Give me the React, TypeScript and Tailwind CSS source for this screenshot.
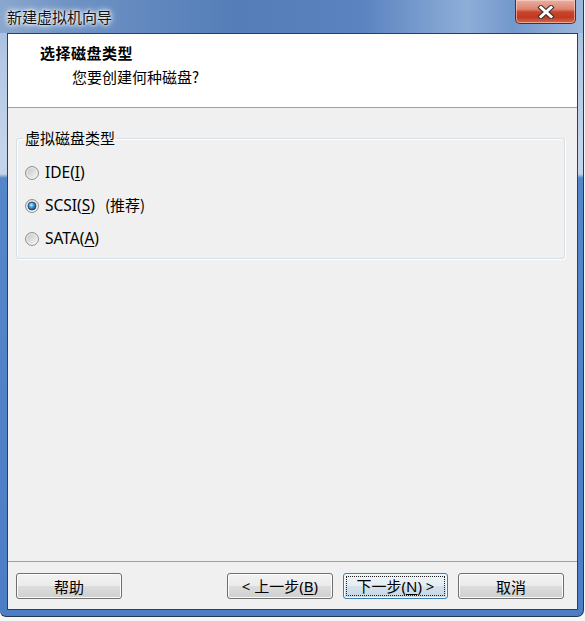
import React from "react";

function Radio({ checked }: { checked?: boolean }) {
  return (
    <svg width="14" height="14" viewBox="0 0 14 14" className="shrink-0">
      <defs>
        <linearGradient id="rfill" x1="0" y1="0" x2="1" y2="1">
          <stop offset="0" stopColor="#c2c2c2" />
          <stop offset="0.5" stopColor="#dedede" />
          <stop offset="1" stopColor="#f8f8f8" />
        </linearGradient>
        <radialGradient id="rdot" cx="0.42" cy="0.38" r="0.7">
          <stop offset="0" stopColor="#d2f0ff" />
          <stop offset="0.35" stopColor="#4eaae6" />
          <stop offset="0.75" stopColor="#1a62a0" />
          <stop offset="1" stopColor="#0f3a62" />
        </radialGradient>
      </defs>
      <circle cx="7" cy="7" r="6.4" fill="url(#rfill)" stroke="#858686" strokeWidth="1" />
      <circle cx="7" cy="7" r="5.3" fill="none" stroke="#f4f4f4" strokeWidth="0.8" />
      {checked && (
        <circle cx="7" cy="7" r="4" fill="url(#rdot)" stroke="#163f66" strokeWidth="0.8" />
      )}
    </svg>
  );
}

function CloseX() {
  return (
    <svg width="18" height="14" viewBox="0 0 18 14">
      <g strokeLinecap="square">
        <line x1="4" y1="2.5" x2="14" y2="11.5" stroke="#3a3030" strokeWidth="5" />
        <line x1="14" y1="2.5" x2="4" y2="11.5" stroke="#3a3030" strokeWidth="5" />
        <line x1="4" y1="2.5" x2="14" y2="11.5" stroke="#ffffff" strokeWidth="3" />
        <line x1="14" y1="2.5" x2="4" y2="11.5" stroke="#ffffff" strokeWidth="3" />
      </g>
    </svg>
  );
}

export default function App() {
  return (
    <div className="w-[585px] h-[621px] bg-[#f4f6f8] overflow-hidden font-['Noto_Sans','Noto_Sans_CJK_SC',sans-serif]">
      <div className="w-[584px] h-[617px] flex flex-col border-r border-b border-[#26374f] rounded-bl-[6px] rounded-br-[7px] overflow-hidden bg-[linear-gradient(to_bottom,#9db8dd_0px,#b4c8e4_60px,#c2d3ea_140px,#c2d3ea_174px,#5686c9_178px,#4c7ec6_100%)]">
        {/* Title bar */}
        <div className="h-[33px] shrink-0 flex items-start bg-[linear-gradient(to_right,#8ba7ce_0%,#6e92c4_12%,#557eb8_40%,#5a83bf_62%,#8eaed8_80%,#7398cb_88%,#9cb7dc_100%)]">
          <div className="pl-[7px] pt-[6px] text-[15px] leading-[22px] text-[#141414] [text-shadow:0_0_8px_#ffffff,0_0_5px_#ffffff,0_0_3px_rgba(255,255,255,0.9)] font-['Noto_Sans_CJK_SC',sans-serif]">
            新建虚拟机向导
          </div>
          <div className="flex-1" />
          <div className="mr-[7px] w-[61px] h-[24px] rounded-b-[5px] border border-t-0 border-[#5b2a22] flex items-center justify-center bg-[linear-gradient(to_bottom,#eab0a4_0%,#dc8470_40%,#c8452c_52%,#c13a21_75%,#d26a52_100%)] shadow-[inset_0_0_0_1px_rgba(255,220,210,0.55)]">
            <CloseX />
          </div>
        </div>

        {/* Client */}
        <div className="ml-[7px] mr-[5px] h-[577px] shrink-0 border border-[#2e3f58] bg-[#f0f0f0] flex flex-col">
          {/* Header */}
          <div className="h-[74px] shrink-0 bg-white border-b border-[#a0a0a0] pt-[9px] pl-[32px]">
            <div className="text-[15px] leading-[20px] font-bold tracking-[0.5px] text-black font-['Noto_Sans_CJK_SC',sans-serif]">
              选择磁盘类型
            </div>
            <div className="mt-[4px] ml-[32px] text-[15px] leading-[20px] text-black font-['Noto_Sans_CJK_SC',sans-serif]">
              您要创建何种磁盘?
            </div>
          </div>

          {/* Body */}
          <div className="flex-1 flex flex-col">
            <fieldset className="mt-[20px] ml-[8px] mr-[12px] border border-[#d5dfe5] rounded-[3px] shadow-[inset_1px_1px_0_#ffffff,1px_1px_0_#ffffff]">
              <legend className="ml-[6px] px-[2px] text-[15px] leading-[20px] text-black font-['Noto_Sans_CJK_SC',sans-serif]">
                虚拟磁盘类型
              </legend>
              <div className="pl-[8px] pt-[8px] pb-[3px]">
                <div className="h-[33px] flex items-center gap-[6px] text-[15.5px] text-black">
                  <Radio />
                  <span>
                    IDE(<span className="underline underline-offset-2">I</span>)
                  </span>
                </div>
                <div className="h-[33px] flex items-center gap-[6px] text-[15.5px] text-black">
                  <Radio checked />
                  <span>
                    SCSI(<span className="underline underline-offset-2">S</span>)
                  </span>
                  <span className="ml-[4px] text-[15px] font-['Noto_Sans_CJK_SC',sans-serif]">(推荐)</span>
                </div>
                <div className="h-[33px] flex items-center gap-[6px] text-[15.5px] text-black">
                  <Radio />
                  <span>
                    SATA(<span className="underline underline-offset-2">A</span>)
                  </span>
                </div>
              </div>
            </fieldset>

            <div className="flex-1" />

            <div className="h-px bg-[#a0a0a0]" />

            {/* Footer */}
            <div className="h-[47px] shrink-0 flex items-start pt-[11px] pl-[8px] pr-[13px]">
              <button className="w-[106px] h-[26px] rounded-[3px] border border-[#707070] bg-[linear-gradient(to_bottom,#f2f2f2_0%,#ebebeb_50%,#dddddd_50%,#cfcfcf_100%)] shadow-[inset_0_0_0_1px_#fbfbfb] flex items-center justify-center text-[15px] leading-none text-black font-['Noto_Sans_CJK_SC',sans-serif]">
                帮助
              </button>
              <div className="flex-1" />
              <div className="flex gap-[10px]">
                <button className="w-[106px] h-[26px] rounded-[3px] border border-[#707070] bg-[linear-gradient(to_bottom,#f2f2f2_0%,#ebebeb_50%,#dddddd_50%,#cfcfcf_100%)] shadow-[inset_0_0_0_1px_#fbfbfb] flex items-center justify-center text-[15px] leading-none text-black">
                  <span>
                    &lt; 上一步(<span className="underline underline-offset-2">B</span>)
                  </span>
                </button>
                <button className="w-[105px] h-[26px] rounded-[3px] border border-[#3c7fb1] bg-[linear-gradient(to_bottom,#eef4f9_0%,#e4edf4_50%,#d5e1eb_50%,#c9d7e3_100%)] shadow-[inset_0_0_0_1px_#f4fbff] outline-1 outline-dotted outline-[#202020] -outline-offset-4 flex items-center justify-center text-[15px] leading-none text-black">
                  <span>
                    下一步(<span className="underline underline-offset-2">N</span>) &gt;
                  </span>
                </button>
                <button className="w-[106px] h-[26px] rounded-[3px] border border-[#707070] bg-[linear-gradient(to_bottom,#f2f2f2_0%,#ebebeb_50%,#dddddd_50%,#cfcfcf_100%)] shadow-[inset_0_0_0_1px_#fbfbfb] flex items-center justify-center text-[15px] leading-none text-black font-['Noto_Sans_CJK_SC',sans-serif]">
                  取消
                </button>
              </div>
            </div>
          </div>
        </div>
      </div>
    </div>
  );
}
